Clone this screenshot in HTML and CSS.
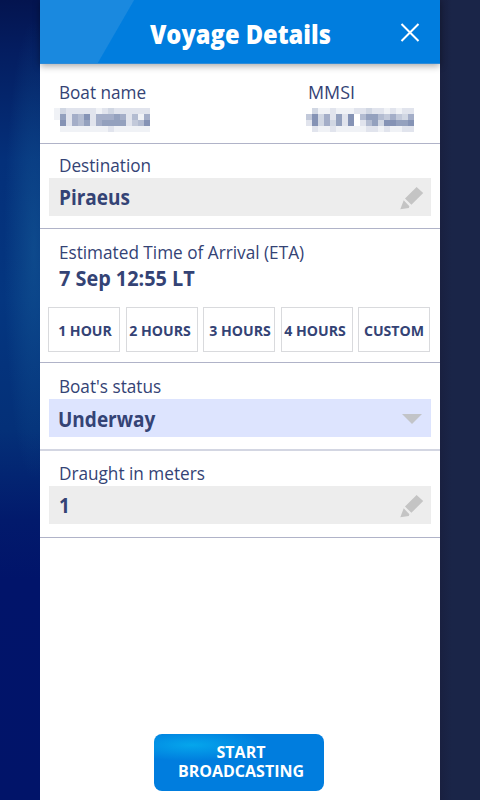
FILE: index.html
```html
<!DOCTYPE html>
<html lang="en">
<head>
    <meta charset="UTF-8">
    <meta name="viewport" content="width=device-width, initial-scale=1.0">
    <title>Voyage Details</title>
    <link rel="stylesheet" href="styles.css">
</head>
<body>
    <div class="panel">
        <header class="panel-header">
            <h1>Voyage Details</h1>
            <svg class="close" width="20" height="20" viewBox="0 0 20 20">
                <path d="M1.5 1L18.5 18M18.5 1L1.5 18" stroke="#fff" stroke-width="2" fill="none"/>
            </svg>
        </header>

        <section class="row identity">
            <div class="boat">
                <div class="label">Boat name</div>
                <svg class="masked" id="boatName" width="96" height="24"></svg>
            </div>
            <div class="mmsi">
                <div class="label">MMSI</div>
                <svg class="masked" id="mmsi" width="108" height="24"></svg>
            </div>
        </section>

        <section class="row destination">
            <div class="label">Destination</div>
            <div class="field">
                <span class="value">Piraeus</span>
                <svg class="pencil" width="24" height="24" viewBox="0 0 24 24">
                    <path d="M16.6 1L23.2 7L11.4 18.8L5 12.6ZM3.7 14.2L9.4 20.2L8.8 22.1L0.3 23.2Z" fill="#c4c4c4"/>
                </svg>
            </div>
        </section>

        <section class="row eta">
            <div class="label">Estimated Time of Arrival (ETA)</div>
            <div class="value value-eta">7 Sep 12:55 LT</div>
            <div class="hours">
                <button><span>1 HOUR</span></button>
                <button class="tight"><span>2 HOURS</span></button>
                <button><span>3 HOURS</span></button>
                <button class="tight"><span>4 HOURS</span></button>
                <button class="custom"><span>CUSTOM</span></button>
            </div>
        </section>

        <section class="row status">
            <div class="label">Boat's status</div>
            <div class="field field-select">
                <span class="value">Underway</span>
                <svg class="arrow" width="20" height="10" viewBox="0 0 20 10">
                    <path d="M0 0H20L10 10Z" fill="#c2c4c8"/>
                </svg>
            </div>
        </section>

        <section class="row draught">
            <div class="label">Draught in meters</div>
            <div class="field">
                <span class="value">1</span>
                <svg class="pencil" width="24" height="24" viewBox="0 0 24 24">
                    <path d="M16.6 1L23.2 7L11.4 18.8L5 12.6ZM3.7 14.2L9.4 20.2L8.8 22.1L0.3 23.2Z" fill="#c4c4c4"/>
                </svg>
            </div>
        </section>

        <button class="start">START<br>BROADCASTING</button>
    </div>

    <script>
        // Hidden values are drawn as 6px blocks, one digit per block (0 = white, 9 = darkest)
        const masks = {
            boatName: [
                '1322222123222222',
                '1726582666762516',
                '0826572677772458',
                '0111111112111111'
            ],
            mmsi: [
                '031121112232212122',
                '483627280577546436',
                '283637280257388778',
                '021121111122121122'
            ]
        };

        function drawMask(id) {
            const svg = document.getElementById(id);
            masks[id].forEach((line, y) => {
                [...line].forEach((tone, x) => {
                    const t = tone / 9;
                    const rect = document.createElementNS('http://www.w3.org/2000/svg', 'rect');
                    rect.setAttribute('x', x * 6);
                    rect.setAttribute('y', y * 6);
                    rect.setAttribute('width', 6);
                    rect.setAttribute('height', 6);
                    rect.setAttribute('fill', `rgb(${255 - 137 * t}, ${255 - 121 * t}, ${255 - 83 * t})`);
                    svg.appendChild(rect);
                });
            });
        }

        Object.keys(masks).forEach(drawMask);
    </script>
</body>
</html>
```

FILE: styles.css
```css
* {
    box-sizing: border-box;
}
body {
    margin: 0;
    height: 800px;
    overflow: hidden;
    font-family: "Open Sans", "Noto Sans", sans-serif;
    color: #344375;
    background:
        linear-gradient(to right, #192040 0, #1a2548 12px) 440px 0 / 40px 800px no-repeat,
        radial-gradient(ellipse 30px 230px at 34px 250px, rgba(20, 88, 150, 0.6), rgba(20, 88, 150, 0)) 0 0 / 40px 800px no-repeat,
        linear-gradient(#04144f 0, #041d60 50px, #04307a 160px, #043680 300px, #043078 430px, #021a6c 520px, #01146a 580px, #011469 800px);
}
.panel {
    width: 400px;
    height: 800px;
    margin: 0 auto;
    background: #fff;
    display: flex;
    flex-direction: column;
}
.panel-header {
    height: 64px;
    flex: none;
    display: flex;
    align-items: center;
    justify-content: center;
    position: relative;
    background: linear-gradient(120deg, #1a89df 0, #1a89df 81px, #007dde 82px);
    border-bottom: 1px solid #2d8bd8;
    box-shadow: 0 2px 7px rgba(0, 0, 0, 0.35);
}
.panel-header h1 {
    margin: 5px 0 0;
    font-size: 26px;
    line-height: 30px;
    font-weight: 800;
    color: #fff;
    transform: scaleX(0.91);
}
.close {
    position: absolute;
    right: 20px;
    top: 23px;
}
.row {
    flex: none;
    padding: 0 9px;
    border-bottom: 1px solid #b0b3c8;
}
/* Labels and values are set slightly condensed */
.label {
    font-size: 19px;
    line-height: 26px;
    padding-left: 10px;
    white-space: nowrap;
    transform: scaleX(0.905);
    transform-origin: 9px 0;
}
.value {
    font-size: 21px;
    line-height: 26px;
    font-weight: 700;
    white-space: nowrap;
    transform: scaleX(0.905);
    transform-origin: 0 0;
}
.identity {
    height: 80px;
    padding: 15px 26px 0 9px;
    display: flex;
    justify-content: space-between;
}
.masked {
    display: block;
    margin-top: 3px;
}
.boat .masked {
    margin-left: 5px;
}
.mmsi .label {
    padding-left: 2px;
    transform: scaleX(0.94);
    transform-origin: 2px 0;
}
.destination {
    height: 85px;
    padding-top: 8px;
}
.field {
    height: 38px;
    display: flex;
    align-items: center;
    justify-content: space-between;
    padding: 0 7px 0 10px;
    background: #ededed;
}
.pencil {
    margin-top: 1px;
}
.field-select {
    background: #dde4fe;
    padding: 2px 9px 0;
}
.eta {
    height: 134px;
    padding-top: 10px;
}
.value-eta {
    padding-left: 10px;
    transform: scaleX(0.945);
    transform-origin: 10px 0;
}
.hours {
    display: grid;
    grid-template-columns: repeat(5, 72px);
    column-gap: 5.5px;
    margin: 16px 0 0 -1px;
}
.hours button {
    height: 45px;
    padding: 0;
    border: 1px solid #d9dadd;
    background: #fff;
    color: #344375;
    font: inherit;
    font-size: 15px;
    font-weight: 700;
    white-space: nowrap;
}
.hours span {
    display: block;
    margin: 0 -4px 0 -2px;
    transform: scaleX(0.94);
}
.hours .tight span {
    margin: 0 -1px 0 -5px;
}
.hours .custom span {
    margin: 0 -3px;
}
.status {
    height: 88px;
    padding-top: 10px;
    border-bottom: 2px solid #d3d6e2;
}
.draught {
    height: 87px;
    padding-top: 9px;
}
.start {
    width: 170px;
    height: 57px;
    margin: auto auto 9px 114px;
    flex: none;
    padding: 0 0 1px 4px;
    border: 0;
    border-radius: 8px;
    background: radial-gradient(ellipse 75px 16px at 38px 11px, #05a6ec, rgba(0, 125, 222, 0)) #007dde;
    color: #fff;
    font: inherit;
    font-size: 16px;
    line-height: 19px;
    font-weight: 700;
}
```
